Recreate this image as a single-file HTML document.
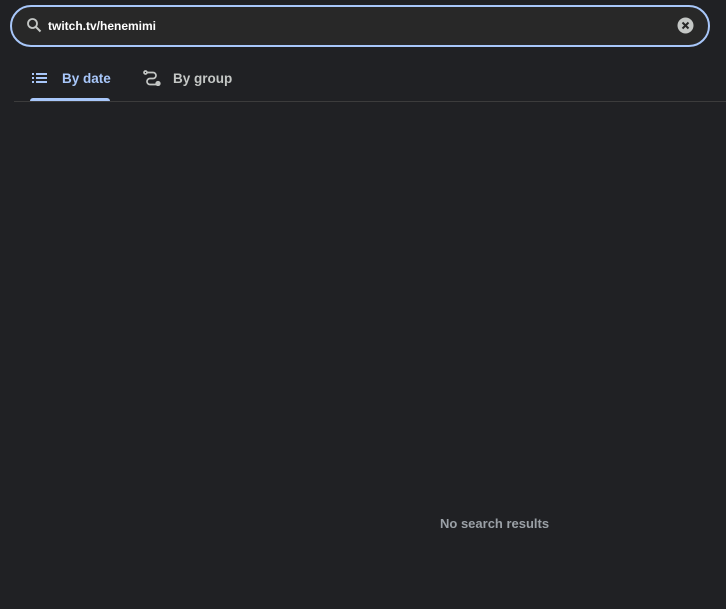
<!DOCTYPE html>
<html><head><style>
body{margin:0;width:726px;height:609px;background:#202124;font-family:"Liberation Sans",sans-serif;overflow:hidden;position:relative}
.search{position:absolute;left:10px;top:5px;width:696px;height:38px;border:2px solid #a8c7fa;border-radius:22px;background:#282828}
.search .t{position:absolute;left:36px;top:12px;color:#fff;font-size:12px;font-weight:bold}
.tab{position:absolute;top:71px;font-size:13.5px;font-weight:bold}
.ul{position:absolute;left:30px;top:98px;width:80px;height:3px;background:#a8c7fa;border-radius:3px 3px 0 0}
.div{position:absolute;left:14px;right:0;top:101px;height:1px;background:#3c3c3c}
.nr{position:absolute;left:440px;top:516px;color:#9aa0a6;font-size:13px;font-weight:bold}
</style></head><body>
<div class="search">
<svg style="position:absolute;left:14px;top:10px" width="16" height="16" viewBox="0 0 16 16"><circle cx="6.5" cy="6.5" r="4.5" fill="none" stroke="#c4c7c5" stroke-width="1.8"/><path d="M10 10l4.5 4.5" stroke="#c4c7c5" stroke-width="2"/></svg>
<div class="t">twitch.tv/henemimi</div>
<svg style="position:absolute;left:665px;top:10px" width="17" height="17" viewBox="0 0 17 17"><circle cx="8.5" cy="8.5" r="8" fill="#c4c7c5"/><path d="M5.5 5.5l6 6M11.5 5.5l-6 6" stroke="#282828" stroke-width="2"/></svg>
</div>
<svg style="position:absolute;left:32px;top:72px" width="16" height="12" viewBox="0 0 16 12"><g fill="#a8c7fa"><rect x="0" y="1" width="2" height="2"/><rect x="4" y="1" width="11" height="2"/><rect x="0" y="5" width="2" height="2"/><rect x="4" y="5" width="11" height="2"/><rect x="0" y="9" width="2" height="2"/><rect x="4" y="9" width="11" height="2"/></g></svg>
<div class="tab" style="left:62px;color:#a8c7fa">By date</div>
<svg style="position:absolute;left:143px;top:70px" width="18" height="16" viewBox="0 0 18 16"><g fill="none" stroke="#c4c7c5" stroke-width="1.7"><circle cx="2.5" cy="2.5" r="1.5"/><path d="M4 2.5h6a3 3 0 0 1 0 6H7a3 3 0 0 0 0 6h6"/><circle cx="15" cy="13.5" r="1.8" fill="#c4c7c5"/></g></svg>
<div class="tab" style="left:173px;color:#c4c7c5">By group</div>
<div class="div"></div><div class="ul"></div>
<div class="nr">No search results</div>
</body></html>
